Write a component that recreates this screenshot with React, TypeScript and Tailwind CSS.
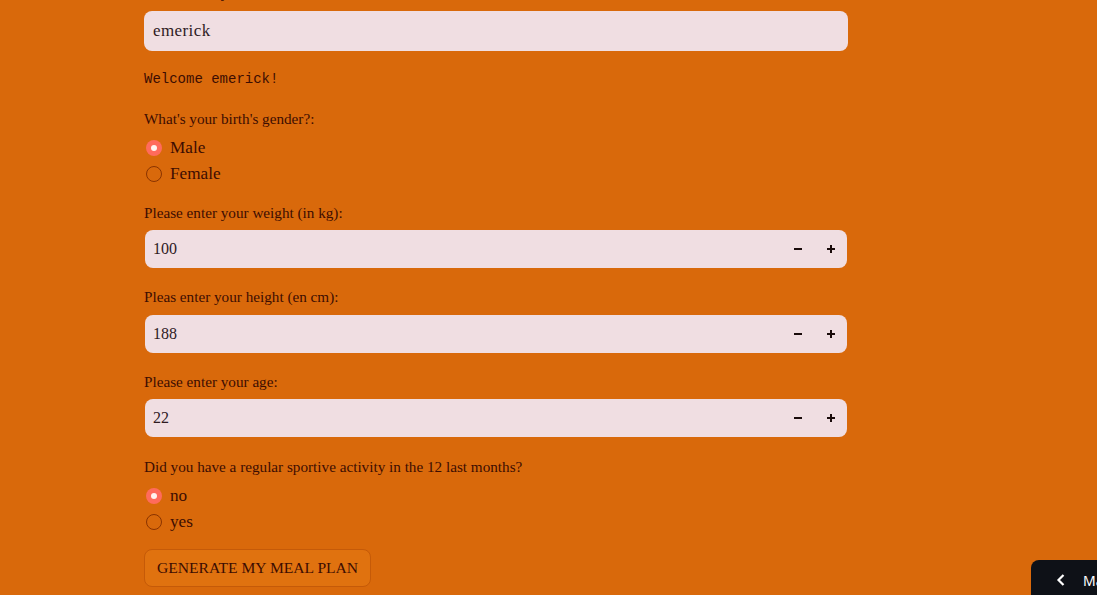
import React from "react";

const serif = { fontFamily: '"Liberation Serif", "Times New Roman", serif' };

function Label({ children }: { children: React.ReactNode }) {
  return (
    <div className="text-[15.2px] leading-[21px] text-[#3d0d02]">{children}</div>
  );
}

function Radio({ checked, label }: { checked: boolean; label: string }) {
  return (
    <div className="flex h-[26px] items-center">
      {checked ? (
        <span className="ml-[2px] flex h-[16px] w-[16px] items-center justify-center rounded-full bg-[#ff6b5c]">
          <span className="h-[6px] w-[6px] rounded-full bg-[#fff4f0]" />
        </span>
      ) : (
        <span className="ml-[2px] h-[16px] w-[16px] rounded-full border border-[#8a3300]" />
      )}
      <span className="ml-[8px] text-[17.2px] leading-[24px] text-[#3d0d02]">{label}</span>
    </div>
  );
}

function Minus() {
  return (
    <svg width="10" height="10" viewBox="0 0 10 10">
      <path d="M1 5h8" stroke="#1a0b0b" strokeWidth="2" />
    </svg>
  );
}
function Plus() {
  return (
    <svg width="10" height="10" viewBox="0 0 10 10">
      <path d="M1 5h8M5 1v8" stroke="#1a0b0b" strokeWidth="2" />
    </svg>
  );
}

function NumberInput({ value }: { value: string }) {
  return (
    <div className="ml-[1px] flex h-[38px] w-[702px] items-center rounded-lg bg-[#f0dee2]">
      <span className="flex-1 pl-[8px] text-[16px] text-[#2e1a1f]">{value}</span>
      <span className="flex h-full w-[32px] items-center justify-center"><Minus /></span>
      <span className="mr-[1px] flex h-full w-[32px] items-center justify-center pl-[2px]"><Plus /></span>
    </div>
  );
}

export default function App() {
  return (
    <div className="relative h-[595px] w-[1097px] overflow-hidden bg-[#d9690b]" style={serif}>
      <div className="ml-[144px] mt-[-18px] flex w-[704px] flex-col">
        <div className="mb-[8px]">
          <Label>Please enter your name:</Label>
        </div>
        <div className="flex h-[40px] items-center rounded-lg bg-[#f0dee2] pl-[9px] text-[17px] tracking-[0.4px] text-[#2e1a1f]">
          emerick
        </div>
        <div
          className="mt-[18px] text-[14px] leading-[21px] text-[#3d0d02]"
          style={{ fontFamily: '"Liberation Mono", "Courier New", monospace' }}
        >
          Welcome emerick!
        </div>
        <div className="mt-[18px]">
          <Label>What's your birth's gender?:</Label>
        </div>
        <div className="mt-[6px] flex flex-col">
          <Radio checked label="Male" />
          <Radio checked={false} label="Female" />
        </div>
        <div className="mt-[15px]">
          <Label>Please enter your weight (in kg):</Label>
        </div>
        <div className="mt-[7px]">
          <NumberInput value="100" />
        </div>
        <div className="mt-[18px]">
          <Label>Pleas enter your height (en cm):</Label>
        </div>
        <div className="mt-[8px]">
          <NumberInput value="188" />
        </div>
        <div className="mt-[18px]">
          <Label>Please enter your age:</Label>
        </div>
        <div className="mt-[7px]">
          <NumberInput value="22" />
        </div>
        <div className="mt-[19px]">
          <Label>Did you have a regular sportive activity in the 12 last months?</Label>
        </div>
        <div className="mt-[6px] flex flex-col">
          <Radio checked label="no" />
          <Radio checked={false} label="yes" />
        </div>
        <div className="mt-[14px]">
          <button className="h-[38px] rounded-lg border border-[#c55a08] bg-[#e0720f] px-[12px] text-[15.6px] text-[#3d0d02]">
            GENERATE MY MEAL PLAN
          </button>
        </div>
      </div>
      <div
        className="absolute left-[1031px] top-[560px] flex h-[40px] w-[140px] items-center whitespace-nowrap rounded-tl-lg bg-[#0e1117] pl-[25px] text-white"
        style={{ fontFamily: '"Noto Sans", sans-serif' }}
      >
        <svg className="shrink-0" width="10" height="14" viewBox="0 0 10 14">
          <path d="M7.5 2L2.5 7l5 5" stroke="white" strokeWidth="2.2" fill="none" />
        </svg>
        <span className="ml-[17px] shrink-0 text-[14px]">Manage app</span>
      </div>
    </div>
  );
}
